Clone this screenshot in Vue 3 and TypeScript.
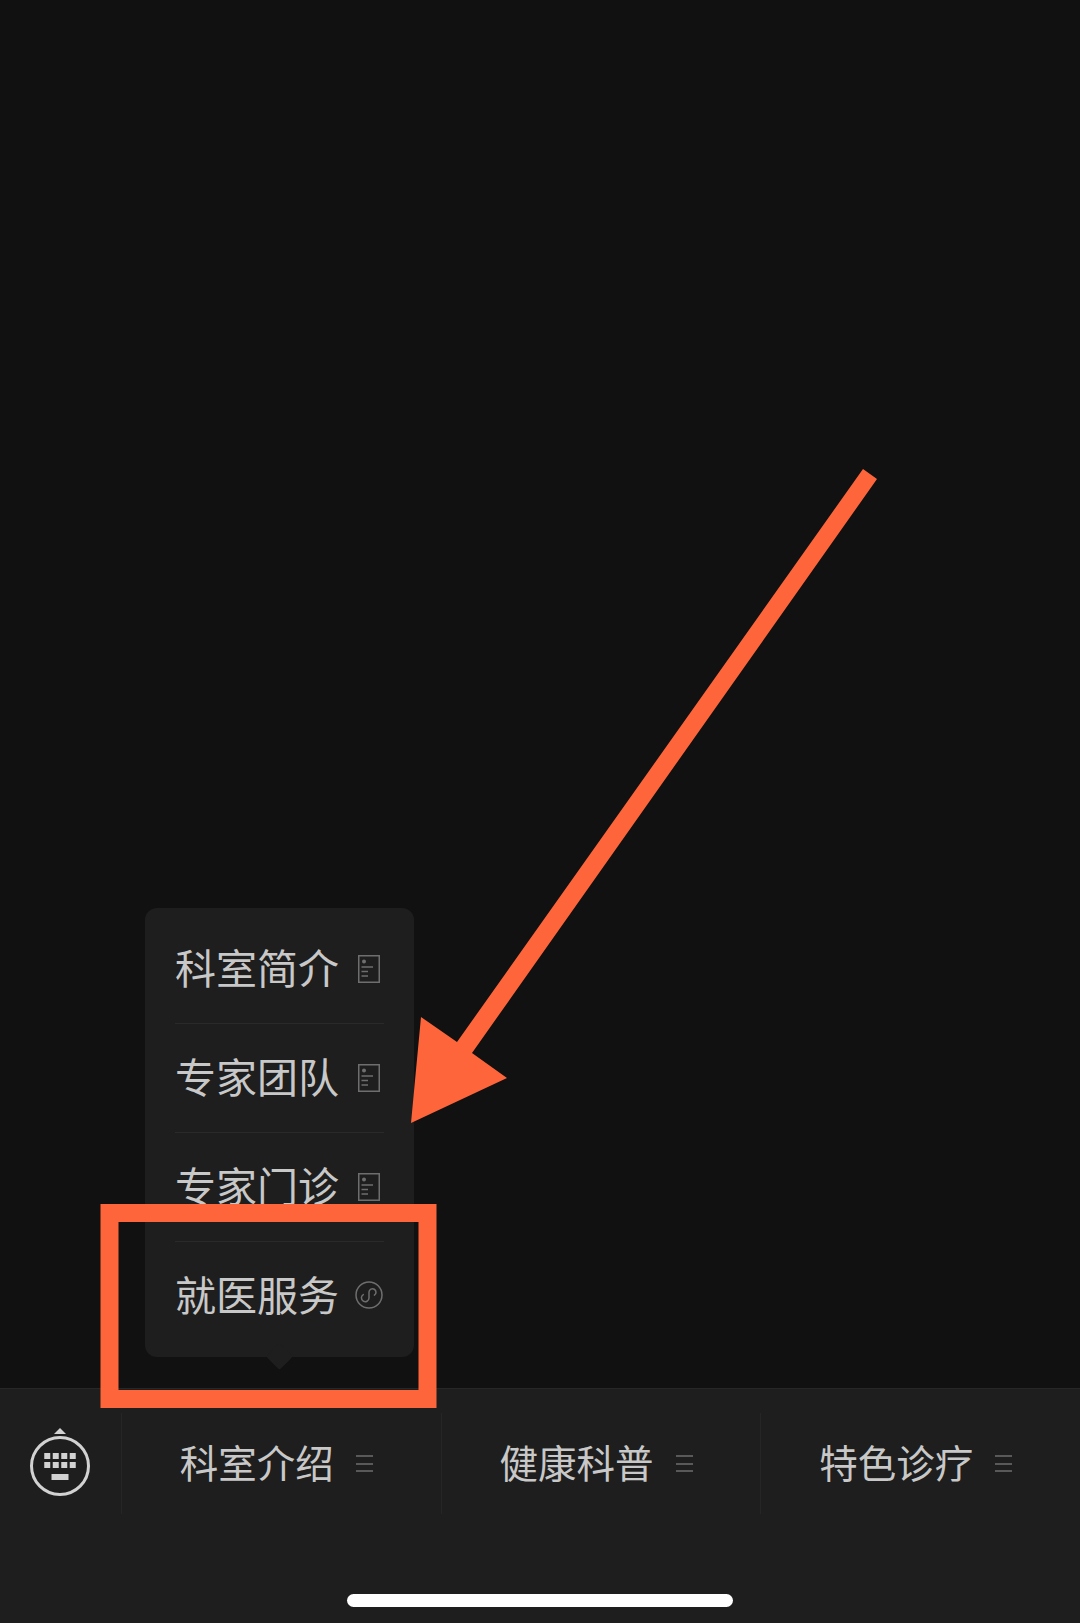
<script setup lang="ts">
interface MenuRow {
  label: string;
  icon: 'doc' | 'mini';
}

const popupRows: MenuRow[] = [
  { label: '科室简介', icon: 'doc' },
  { label: '专家团队', icon: 'doc' },
  { label: '专家门诊', icon: 'doc' },
  { label: '就医服务', icon: 'mini' }
];

const tabs: string[] = ['科室介绍', '健康科普', '特色诊疗'];

const keyColumns: number[] = [0, 8.5, 17, 25.5];
</script>

<template>
  <div class="page">
    <main class="chat">
      <div class="popup">
        <div v-for="row in popupRows" :key="row.label" class="popup-row">
          <span class="popup-label">{{ row.label }}</span>
          <svg v-if="row.icon === 'doc'" class="doc-icon" viewBox="0 0 22 28" width="22" height="28">
            <rect x="0.75" y="0.75" width="20.5" height="26.5" fill="none" stroke="#6e6e6e" stroke-width="1.5" />
            <circle cx="6" cy="6.5" r="2" fill="#6e6e6e" />
            <path d="M3.5 12H15M3.5 16.500H10M3.5 21H10" fill="none" stroke="#6e6e6e" stroke-width="1.500" />
          </svg>
          <svg v-else class="mini-icon" viewBox="0 0 28 28" width="28" height="28">
            <circle cx="14" cy="14" r="13" fill="none" stroke="#6e6e6e" stroke-width="1.500" />
            <path d="M8.300 13.600A3.800 3.800 0 1 0 14 17V11A3.500 3.500 0 1 1 19.400 14.200" fill="none" stroke="#6e6e6e" stroke-width="1.500" stroke-linecap="round" />
          </svg>
        </div>
        <span class="popup-caret"></span>
      </div>
    </main>

    <footer class="bar">
      <div class="tab-row">
        <div class="keyboard-slot">
          <svg viewBox="0 0 62 70" width="62" height="70">
            <path d="M25 7L31 1L37 7Z" fill="#d2d2d2" />
            <circle cx="31" cy="39" r="28.500" fill="none" stroke="#d2d2d2" stroke-width="3" />
            <template v-for="x in keyColumns" :key="x">
              <rect :x="15.250 + x" y="26" width="6" height="6" fill="#d2d2d2" />
              <rect :x="15.250 + x" y="35" width="6" height="6" fill="#d2d2d2" />
            </template>
            <rect x="22.500" y="47" width="17" height="6" fill="#d2d2d2" />
          </svg>
        </div>
        <div v-for="tab in tabs" :key="tab" class="tab">
          <span class="tab-label">{{ tab }}</span>
          <span class="tab-menu"><i></i><i></i><i></i></span>
        </div>
      </div>
      <div class="home-indicator"></div>
    </footer>

    <!-- annotation drawn over the screenshot -->
    <svg class="annotation" viewBox="0 0 1080 1623" width="1080" height="1623">
      <polygon points="863,469 877,479 472,1053 507,1078 411,1123 421,1017 457,1042" fill="#ff653b" />
      <rect x="109.500" y="1213" width="318" height="186" fill="none" stroke="#ff653b" stroke-width="18" />
    </svg>
  </div>
</template>

<style scoped>
.page {
  position: relative;
  width: 1080px;
  height: 1623px;
  display: flex;
  flex-direction: column;
  overflow: hidden;
  background: #111;
  color: #c8c8c8;
  font-family: "Noto Sans CJK SC", "Noto Sans", sans-serif;
}

.chat {
  flex: 1;
  display: flex;
  align-items: flex-end;
  padding: 0 0 31px 145px;
}

.popup {
  position: relative;
  width: 269px;
  box-sizing: border-box;
  padding: 7px 30px 6px;
  background: #1e1e1e;
  border-radius: 12px;
}

.popup-row {
  height: 109px;
  box-sizing: border-box;
  display: flex;
  align-items: center;
  justify-content: space-between;
  border-bottom: 1px solid #2a2a2a;
}

.popup-row:last-of-type {
  border-bottom: none;
}

.popup-label {
  font-size: 41px;
  line-height: 1;
  margin-bottom: 6px;
  white-space: nowrap;
}

.doc-icon {
  margin-right: 4px;
}

.mini-icon {
  margin: 0 1px 3px 0;
}

.popup-caret {
  position: absolute;
  left: 125px;
  bottom: -9px;
  width: 19px;
  height: 19px;
  background: #1e1e1e;
  transform: rotate(45deg);
  border-radius: 2px;
}

.bar {
  height: 235px;
  box-sizing: border-box;
  padding-top: 24px;
  display: flex;
  flex-direction: column;
  background: #1e1e1e;
  border-top: 1px solid #272727;
}

.tab-row {
  display: flex;
  height: 101px;
}

.keyboard-slot {
  width: 121px;
  display: flex;
  justify-content: center;
  padding-top: 14px;
  box-sizing: border-box;
}

.tab {
  width: 320px;
  box-sizing: border-box;
  display: flex;
  align-items: center;
  gap: 22px;
  padding-left: 58px;
  border-left: 1px solid #262626;
}

.tab-label {
  font-size: 38.5px;
  line-height: 1;
  margin-bottom: 4px;
  white-space: nowrap;
}

.tab-menu {
  width: 17px;
  height: 17px;
  display: flex;
  flex-direction: column;
  justify-content: space-between;
}

.tab-menu i {
  display: block;
  height: 2px;
  background: #595959;
}

.home-indicator {
  width: 386px;
  height: 13px;
  margin: 80px auto 0;
  border-radius: 7px;
  background: #fff;
}

.annotation {
  position: absolute;
  top: 0;
  left: 0;
  pointer-events: none;
}
</style>
